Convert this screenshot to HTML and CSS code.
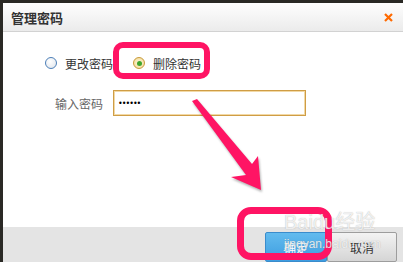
FILE: index.html
```html
<!DOCTYPE html>
<html lang="zh-CN">

<head>
  <meta charset="UTF-8">
  <title>管理密码</title>
  <link rel="stylesheet" href="styles.css">
</head>

<body>
  <div class="dialog">
    <div class="dialog-head">
      <span class="dialog-title">管理密码</span>
      <svg class="close" width="9" height="9" viewBox="0 0 9 9">
        <path d="M1 1 L8 8 M8 1 L1 8" stroke="#ff6a00" stroke-width="2.2" fill="none" />
      </svg>
    </div>

    <div class="dialog-body">
      <div class="radio-row">
        <span class="radio"></span>
        <span class="radio-label first">更改密码</span>
        <span class="radio checked"><span class="dot"></span></span>
        <span class="radio-label">删除密码</span>
      </div>

      <div class="field-row">
        <label class="field-label">输入密码</label>
        <input class="field-input" type="password" value="123456">
      </div>
    </div>

    <div class="dialog-foot">
      <button class="btn btn-ok">确定</button>
      <button class="btn btn-cancel">取消</button>
    </div>
  </div>

  <!-- annotations drawn over the screenshot -->
  <div class="mark mark-radio"></div>
  <div class="mark mark-ok"></div>
  <svg class="arrow" width="403" height="262" viewBox="0 0 403 262">
    <polygon points="192,101 197,99 252,164 258,156 261,190 231,177 246,175" fill="#ff1464" />
  </svg>

  <div class="watermark">
    <div class="wm-logo">Baidu经验</div>
    <div class="wm-url">jingyan.baidu.com</div>
  </div>
</body>

</html>
```

FILE: styles.css
```css
/* Page */
body {
  margin: 0;
  width: 403px;
  height: 262px;
  overflow: hidden;
  position: relative;
  background: #2a2925;
  font-family: "Noto Sans CJK SC", "Liberation Sans", sans-serif;
}

/* Dialog */
.dialog {
  margin: 3px 0 0 3px;
  width: 400px;
  background: #fff;
  display: flex;
  flex-direction: column;
}

.dialog-head {
  height: 28px;
  border-bottom: 1px solid #d2d2d2;
  background: linear-gradient(#fefefe, #ebebeb);
  display: flex;
  align-items: center;
  justify-content: space-between;
  padding: 0 10px 0 8px;
}

.dialog-title {
  font-size: 13px;
  font-weight: bold;
  color: #333;
}

.dialog-body {
  height: 177px;
  padding-top: 18px;
}

.radio-row {
  height: 26px;
  display: flex;
  align-items: center;
  padding-left: 42px;
}

.radio {
  width: 12px;
  height: 12px;
  box-sizing: border-box;
  border-radius: 50%;
  border: 1px solid #4d7fb8;
  background: radial-gradient(circle at 40% 35%, #fff, #dde3ea);
  display: flex;
  align-items: center;
  justify-content: center;
}

.radio.checked {
  border-color: #c99a3a;
  background: radial-gradient(circle, #fff7dc, #f1d78f);
}

.radio .dot {
  width: 5px;
  height: 5px;
  border-radius: 50%;
  background: #3fa52e;
}

.radio-label {
  margin-left: 8px;
  font-size: 12px;
  color: #333;
}

.radio-label.first {
  margin-right: 20px;
}

.field-row {
  margin-top: 14px;
  display: flex;
  align-items: center;
  padding-left: 52px;
}

.field-label {
  width: 58px;
  font-size: 12px;
  color: #666;
}

.field-input {
  width: 193px;
  height: 26px;
  box-sizing: border-box;
  border: 1px solid #cf9d45;
  box-shadow: inset 0 0 0 1px #f2d9a6;
  padding: 0 4px;
  font-family: "DejaVu Sans", sans-serif;
  font-size: 8px;
  letter-spacing: -1px;
  color: #000;
  outline: none;
}

.dialog-foot {
  height: 40px;
  background: #e4e4e4;
  display: flex;
  justify-content: flex-end;
  padding: 5px 6px 0 0;
  box-sizing: border-box;
}

.btn {
  height: 30px;
  font-family: "Noto Sans CJK SC", sans-serif;
  font-size: 12px;
  border-radius: 2px;
  padding: 0;
}

.btn-ok {
  width: 62px;
  color: #fff;
  border: 1px solid #3a8ccc;
  background: linear-gradient(#62bbee, #3d9de0);
}

.btn-cancel {
  width: 70px;
  color: #333;
  border: 1px solid #9d9d9d;
  background: linear-gradient(#f3f3f3, #d5d5d5);
}

/* Annotations */
.mark {
  position: absolute;
  border: 6px solid #ff1464;
  border-radius: 10px;
  box-sizing: border-box;
}

.mark-radio {
  left: 113px;
  top: 42px;
  width: 97px;
  height: 37px;
}

.mark-ok {
  left: 237px;
  top: 207px;
  width: 95px;
  height: 53px;
  border-width: 7px;
  border-radius: 14px;
}

.arrow {
  position: absolute;
  left: 0;
  top: 0;
  filter: drop-shadow(1px 2px 1px rgba(0, 0, 0, 0.3));
}

.watermark {
  position: absolute;
  left: 284px;
  top: 209px;
  color: rgba(255, 255, 255, 0.8);
  text-shadow: 0 0 1px rgba(120, 120, 120, 0.6);
}

.wm-logo {
  font-family: "Liberation Sans", "Noto Sans CJK SC", sans-serif;
  font-size: 20px;
  line-height: 26px;
}

.wm-url {
  font-family: "Liberation Sans", sans-serif;
  font-size: 12px;
  line-height: 14px;
  margin-top: 2px;
}
```
